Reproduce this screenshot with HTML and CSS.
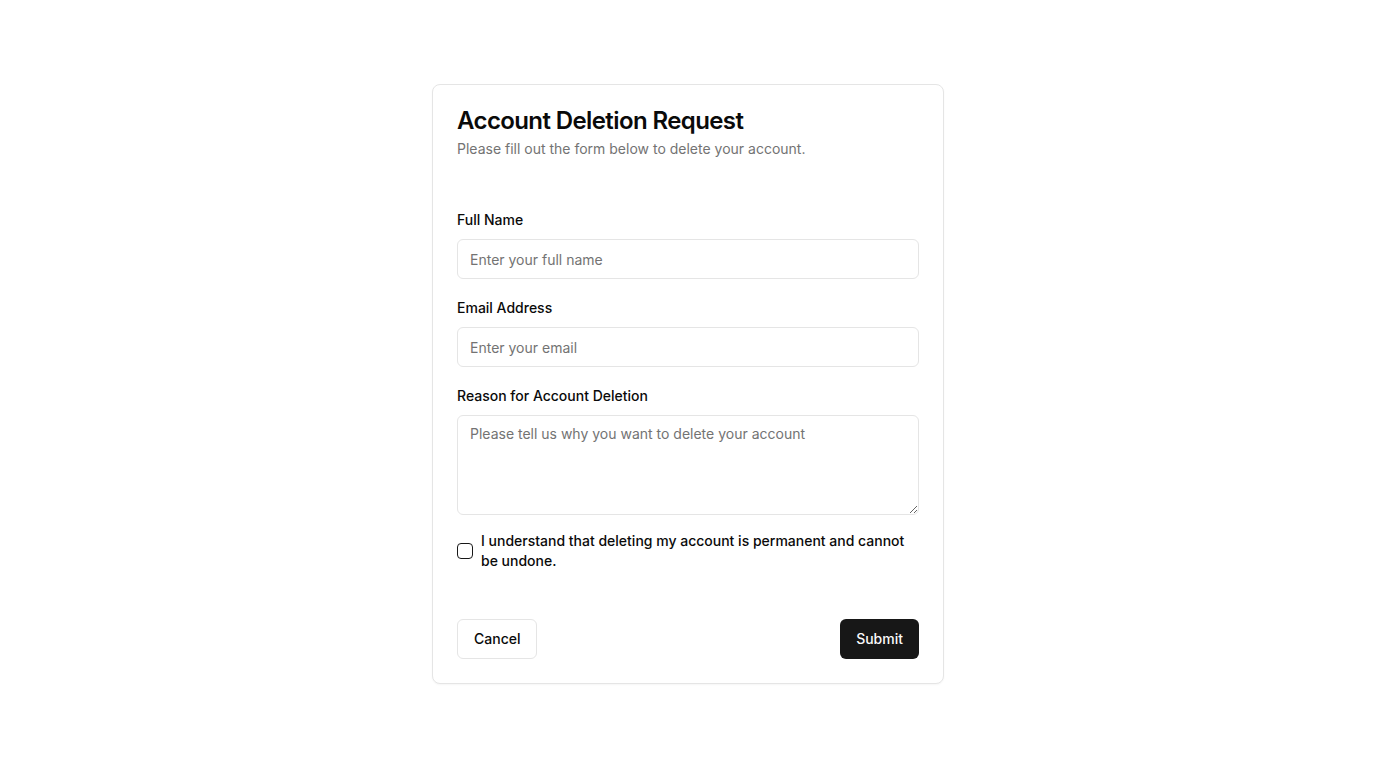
FILE: index.html
```html
<!DOCTYPE html>
<html lang="en">
<head>
<meta charset="utf-8">
<title>Account Deletion Request</title>
<link rel="stylesheet" href="styles.css">
</head>
<body>
<main class="page">
  <div class="card">
    <div class="card-header">
      <h1 class="title">Account Deletion Request</h1>
      <p class="desc">Please fill out the form below to delete your account.</p>
    </div>
    <form class="form">
      <div class="field">
        <label class="label" for="name">Full Name</label>
        <input class="input" id="name" type="text" placeholder="Enter your full name">
      </div>
      <div class="field">
        <label class="label" for="email">Email Address</label>
        <input class="input" id="email" type="email" placeholder="Enter your email">
      </div>
      <div class="field">
        <label class="label" for="reason">Reason for Account Deletion</label>
        <textarea class="textarea" id="reason" placeholder="Please tell us why you want to delete your account"></textarea>
      </div>
      <div class="check-row">
        <input class="checkbox" id="confirm" type="checkbox">
        <label class="check-label" for="confirm">I understand that deleting my account is permanent and cannot be undone.</label>
      </div>
    </form>
    <div class="card-footer">
      <button class="btn btn-outline" type="button">Cancel</button>
      <button class="btn btn-primary" type="button">Submit</button>
    </div>
  </div>
</main>
</body>
</html>
```

FILE: styles.css
```css
* { box-sizing: border-box; }
html, body { margin: 0; padding: 0; background: #ffffff; }
body {
  font-family: Inter, "Liberation Sans", sans-serif;
  color: #0a0a0a;
  -webkit-font-smoothing: antialiased;
}
.page {
  min-height: 768px;
  display: flex;
  align-items: center;
  justify-content: center;
}
.card {
  width: 512px;
  height: 600px;
  border: 1px solid #e5e5e5;
  border-radius: 8px;
  background: #fff;
  box-shadow: 0 1px 2px rgba(0,0,0,0.04);
  padding: 24px 24px 24px;
  display: flex;
  flex-direction: column;
}
.card-header { display: flex; flex-direction: column; gap: 6px; }
.title {
  margin: 0;
  font-size: 24px;
  line-height: 24px;
  font-weight: 600;
  letter-spacing: -0.6px;
  color: #0a0a0a;
}
.desc {
  margin: 0;
  font-size: 14px;
  line-height: 20px;
  color: #737373;
}
.form {
  margin-top: 51px;
  display: flex;
  flex-direction: column;
  gap: 19px;
}
.field { display: flex; flex-direction: column; gap: 9px; }
.label {
  font-size: 14px;
  line-height: 20px;
  font-weight: 500;
  color: #0a0a0a;
}
.input, .textarea {
  width: 100%;
  border: 1px solid #e5e5e5;
  border-radius: 6px;
  background: #fff;
  font-family: inherit;
  font-size: 14px;
  line-height: 20px;
  color: #0a0a0a;
  padding: 0 12px;
  outline: none;
}
.input { height: 40px; }
.textarea {
  height: 100px;
  padding: 8px 12px;
  resize: vertical;
  display: block;
}
.input::placeholder, .textarea::placeholder { color: #737373; opacity: 1; }
.check-row {
  display: flex;
  align-items: center;
  gap: 8px;
  margin-top: -3px;
}
.checkbox {
  appearance: none;
  -webkit-appearance: none;
  margin: 0;
  width: 16px;
  height: 16px;
  flex: none;
  border: 1px solid #171717;
  border-radius: 4px;
  background: #fff;
}
.check-label {
  font-size: 14px;
  line-height: 20px;
  font-weight: 500;
  color: #0a0a0a;
}
.card-footer {
  margin-top: auto;
  display: flex;
  justify-content: space-between;
  align-items: center;
}
.btn {
  height: 40px;
  padding: 0 16px;
  border-radius: 6px;
  font-family: inherit;
  font-size: 14px;
  font-weight: 500;
  line-height: 20px;
  cursor: pointer;
}
.btn-outline {
  background: #fff;
  border: 1px solid #e5e5e5;
  color: #0a0a0a;
}
.btn-primary {
  background: #171717;
  border: none;
  color: #fafafa;
}
```
